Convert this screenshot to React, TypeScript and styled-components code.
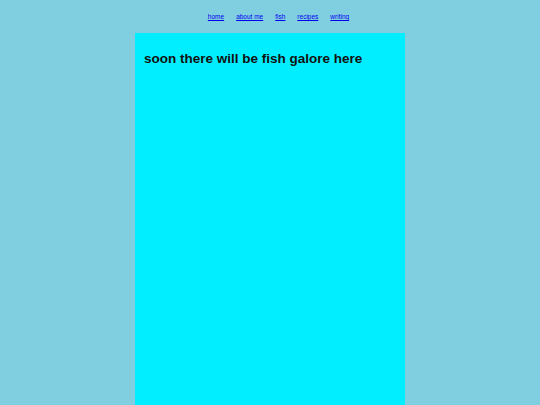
import React from "react";
import styled, { createGlobalStyle } from "styled-components";

const GlobalStyle = createGlobalStyle`
  html, body {
    margin: 0;
    padding: 0;
    background: #80cfe1;
    font-family: "Liberation Sans", Arial, sans-serif;
  }
`;

const Page = styled.div`
  display: flex;
  flex-direction: column;
  align-items: center;
  min-height: 405px;
`;

const Nav = styled.nav`
  display: flex;
  gap: 12px;
  padding: 13px 0 0 17px;
  height: 33px;
  box-sizing: border-box;
  font-size: 6.5px;
`;

const NavLink = styled.a`
  color: #0000ee;
  text-decoration: underline;
`;

const Panel = styled.main`
  flex: 1;
  width: 270px;
  background: #00eeff;
  box-sizing: border-box;
  padding: 18px 9px;
`;

const Heading = styled.h1`
  margin: 0;
  font-size: 13.5px;
  font-weight: bold;
  color: #111;
`;

const links = ["home", "about me", "fish", "recipes", "writing"];

export default function App() {
  return (
    <>
      <GlobalStyle />
      <Page>
        <Nav>
          {links.map((l) => (
            <NavLink key={l} href="#">
              {l}
            </NavLink>
          ))}
        </Nav>
        <Panel>
          <Heading>soon there will be fish galore here</Heading>
        </Panel>
      </Page>
    </>
  );
}
